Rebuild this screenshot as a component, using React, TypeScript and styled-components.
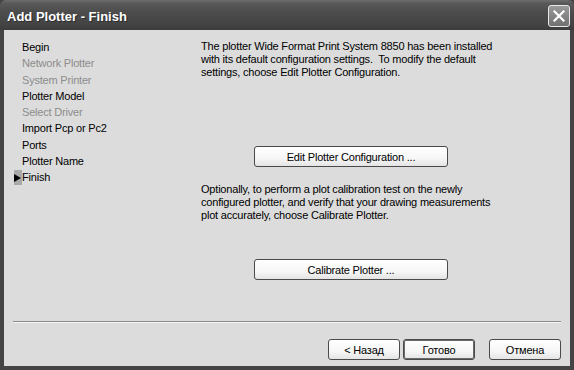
import styled, { createGlobalStyle } from 'styled-components'

const GlobalStyle = createGlobalStyle`
  html, body {
    margin: 0;
    padding: 0;
    background: #3a3a3a;
  }
  * {
    box-sizing: border-box;
  }
`

const steps = [
  { label: 'Begin', enabled: true },
  { label: 'Network Plotter', enabled: false },
  { label: 'System Printer', enabled: false },
  { label: 'Plotter Model', enabled: true },
  { label: 'Select Driver', enabled: false },
  { label: 'Import Pcp or Pc2', enabled: true },
  { label: 'Ports', enabled: true },
  { label: 'Plotter Name', enabled: true },
  { label: 'Finish', enabled: true, current: true },
]

const App = () => {
  return (
    <>
      <GlobalStyle />
      <Window>
        <TitleBar>
          <Title>Add Plotter - Finish</Title>
          <CloseButton>
            <svg width="12" height="12" viewBox="0 0 12 12">
              <path d="M1.5 1.5 L10.5 10.5 M10.5 1.5 L1.5 10.5" stroke="#fff" strokeWidth="2.2" strokeLinecap="square" />
            </svg>
          </CloseButton>
        </TitleBar>

        <Client>
          <Main>
            <StepList>
              {steps.map(s => (
                <Step key={s.label} enabled={s.enabled}>
                  <Marker current={!!s.current}>
                    {s.current && (
                      <svg width="8" height="8" viewBox="0 0 8 8">
                        <path d="M0 0 L7 4 L0 8 Z" fill="#000" />
                      </svg>
                    )}
                  </Marker>
                  {s.label}
                </Step>
              ))}
            </StepList>

            <Content>
              <Para>
                The plotter Wide Format Print System 8850 has been installed
                with its default configuration settings.&nbsp; To modify the default
                settings, choose Edit Plotter Configuration.
              </Para>
              <WideButton top={67}>Edit Plotter Configuration ...</WideButton>
              <Para top={16}>
                Optionally, to perform a plot calibration test on the newly
                configured plotter, and verify that your drawing measurements
                plot accurately, choose Calibrate Plotter.
              </Para>
              <WideButton top={37}>Calibrate Plotter ...</WideButton>
            </Content>
          </Main>

          <Separator />

          <ButtonRow>
            <PushButton>&lt; Назад</PushButton>
            <PushButton isDefault>Готово</PushButton>
            <Spacer />
            <PushButton>Отмена</PushButton>
          </ButtonRow>
        </Client>
      </Window>
    </>
  )
}

export default App

const Window = styled.div`
    width: 574px;
    height: 370px;
    display: flex;
    flex-direction: column;
    background: #444;
    font-family: "Liberation Sans", Arial, sans-serif;
    overflow: hidden;
`

const TitleBar = styled.div`
    height: 30px;
    flex-shrink: 0;
    display: flex;
    align-items: center;
    justify-content: space-between;
    padding: 0 4px 0 7px;
    background: linear-gradient(to bottom, #6e6e6e 0px, #5a5a5a 3px, #4c4c4c 12px, #444 24px, #3c3c3c 30px);
    border-radius: 6px 6px 0 0;
`

const Title = styled.div`
    color: #fff;
    font-size: 13px;
    font-weight: bold;
    padding-top: 2px;
    text-shadow: 1px 1px 0 #2a2a2a;
`

const CloseButton = styled.div`
    width: 22px;
    height: 22px;
    margin-top: 2px;
    display: flex;
    align-items: center;
    justify-content: center;
    border: 1px solid #e8e8e8;
    border-radius: 3px;
    background: linear-gradient(to bottom, #9a9a9a, #707070);
`

const Client = styled.div`
    flex: 1;
    display: flex;
    flex-direction: column;
    margin: 0 4px 4px 4px;
    background: #dcdcdc;
    color: #000;
    font-size: 11px;
    letter-spacing: -0.2px;
`

const Main = styled.div`
    flex: 1;
    display: flex;
`

const StepList = styled.div`
    width: 197px;
    padding: 9px 0 0 10px;
    display: flex;
    flex-direction: column;
`

const Step = styled.div<{ enabled: boolean }>`
    height: 16.3px;
    line-height: 16.3px;
    display: flex;
    align-items: center;
    color: ${props => props.enabled ? '#000' : '#8c8c8c'};
    white-space: nowrap;
`

const Marker = styled.span<{ current: boolean }>`
    width: 8px;
    height: 15px;
    display: flex;
    align-items: center;
    background: ${props => props.current ? '#a9a9a9' : 'transparent'};
`

const Content = styled.div`
    width: 300px;
    padding-top: 10px;
    display: flex;
    flex-direction: column;
`

const Para = styled.p<{ top?: number }>`
    margin: ${props => props.top || 0}px 0 0 0;
    line-height: 13px;
`

const ButtonBase = styled.div`
    height: 21px;
    display: flex;
    align-items: center;
    justify-content: center;
    border: 1px solid #4a4a4a;
    border-radius: 3px;
    background: linear-gradient(to bottom, #ffffff 0%, #f6f6f6 60%, #e4e4e4 100%);
    font-size: 11px;
`

const WideButton = styled(ButtonBase)<{ top: number }>`
    width: 194px;
    margin: ${props => props.top}px auto 0 auto;
`

const Separator = styled.div`
    height: 1px;
    margin: 0 9px;
    background: #8a8a8a;
    border-bottom: 1px solid #f4f4f4;
    box-sizing: content-box;
`

const ButtonRow = styled.div`
    display: flex;
    justify-content: flex-end;
    gap: 3px;
    padding: 16px 9px 6px 0;
`

const PushButton = styled(ButtonBase)<{ isDefault?: boolean }>`
    width: 72px;
    box-shadow: ${props => props.isDefault ? 'inset 0 0 0 1px #6a6a6a' : 'none'};
`

const Spacer = styled.div`
    width: 8px;
`
